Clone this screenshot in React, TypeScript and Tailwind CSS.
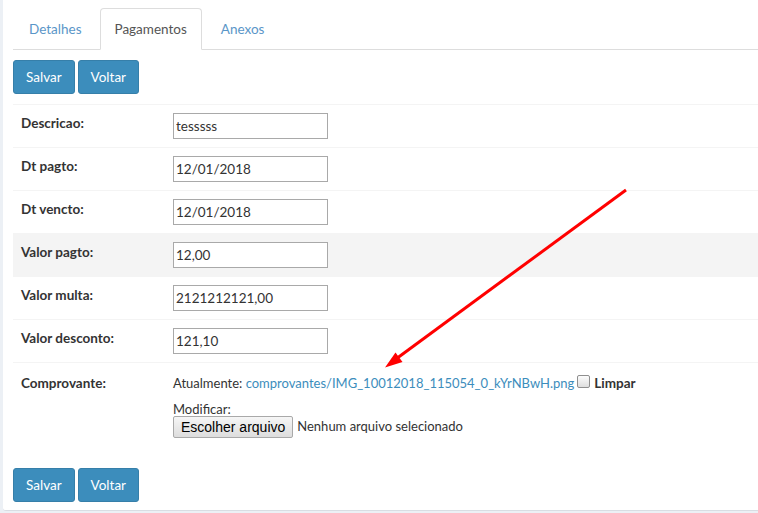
import React from "react";

const rows: { label: string; value: string; shaded?: boolean }[] = [
  { label: "Descricao:", value: "tesssss" },
  { label: "Dt pagto:", value: "12/01/2018" },
  { label: "Dt vencto:", value: "12/01/2018" },
  { label: "Valor pagto:", value: "12,00", shaded: true },
  { label: "Valor multa:", value: "2121212121,00" },
  { label: "Valor desconto:", value: "121,10" },
];

function Buttons() {
  return (
    <div className="flex gap-[3px]">
      <button className="h-[34px] bg-[#3c8dbc] border border-[#367fa9] text-white rounded-[3px] px-[12px] leading-[20px] text-[13.5px]">
        Salvar
      </button>
      <button className="h-[34px] bg-[#3c8dbc] border border-[#367fa9] text-white rounded-[3px] px-[12px] leading-[20px] text-[13.5px]">
        Voltar
      </button>
    </div>
  );
}

export default function App() {
  return (
    <div className="w-[758px] h-[513px] bg-[#ecf0f5] overflow-hidden font-[Lato,sans-serif] text-[13px] text-[#333]">
      <div className="relative ml-[3px] h-[511px] bg-white rounded-bl-[3px] border-b border-[#d9dde3] pl-[10px] pt-[8px]">
        {/* Tabs */}
        <ul className="flex border-b border-[#ddd] h-[42px] text-[13.5px]">
          <li className="-mb-px mr-[2px] px-[15px] py-[10px] leading-[20px] text-[#5a96c8] border border-transparent">
            Detalhes
          </li>
          <li className="-mb-px mr-[2px] px-[14px] py-[10px] leading-[20px] text-[#555] bg-white border border-[#ddd] border-b-white rounded-t-[4px]">
            Pagamentos
          </li>
          <li className="-mb-px mr-[2px] px-[16px] py-[10px] leading-[20px] text-[#5a96c8] border border-transparent">
            Anexos
          </li>
        </ul>

        <div className="mt-[10px]">
          <Buttons />
        </div>

        {/* Table */}
        <div className="mt-[10px]">
          {rows.map((r) => (
            <div
              key={r.label}
              className={`flex h-[43px] border-t border-[#f4f4f4] ${r.shaded ? "bg-[#f4f4f4]" : ""}`}
            >
              <div className="w-[152px] p-[8px] font-bold leading-[20px] text-[13.5px]">{r.label}</div>
              <div className="p-[8px]">
                <input
                  readOnly
                  value={r.value}
                  className="block w-[155px] h-[26px] border border-[#a9a9a9] bg-white pl-[2px] text-[13.5px] text-[#333] outline-none font-[Lato,sans-serif]"
                />
              </div>
            </div>
          ))}
          <div className="flex border-t border-[#f4f4f4]">
            <div className="w-[152px] p-[8px] font-bold leading-[20px] pt-[10px] text-[13.5px]">Comprovante:</div>
            <div className="p-[8px] pt-[10px] flex flex-col">
              <div className="flex items-center leading-[20px] whitespace-nowrap">
                <span>Atualmente:&nbsp;</span>
                <a className="text-[#3c8dbc]">comprovantes/IMG_10012018_115054_0_kYrNBwH.png</a>
                <span className="ml-[3px] mr-[4px] inline-block w-[13px] h-[13px] rounded-[2px] border border-[#8f8f8f] bg-gradient-to-b from-[#fcfcfc] to-[#dedede] -mt-[4px]" />
                <span className="font-bold text-[13.5px]">Limpar</span>
              </div>
              <div className="leading-[20px] mt-[6px]">Modificar:</div>
              <div className="flex items-center mt-[-3px]">
                <span className="h-[22px] px-[7px] flex items-center border border-[#a9a9a9] rounded-[2px] bg-gradient-to-b from-[#f6f6f6] to-[#dddddd] text-black text-[14px] font-['Liberation_Sans',Arial,sans-serif]">
                  Escolher arquivo
                </span>
                <span className="ml-[4px]">Nenhum arquivo selecionado</span>
              </div>
            </div>
          </div>
        </div>

        <div className="mt-[22px]">
          <Buttons />
        </div>

        {/* Annotation arrow */}
        <svg
          className="absolute left-0 top-0 pointer-events-none"
          width="758"
          height="513"
          viewBox="3 0 758 513"
        >
          <line x1="626" y1="190" x2="398" y2="357.5" stroke="#ff0000" strokeWidth="3" />
          <polygon points="385,367.5 402.5,362 395.5,352.5" fill="#ff0000" />
        </svg>
      </div>
    </div>
  );
}
